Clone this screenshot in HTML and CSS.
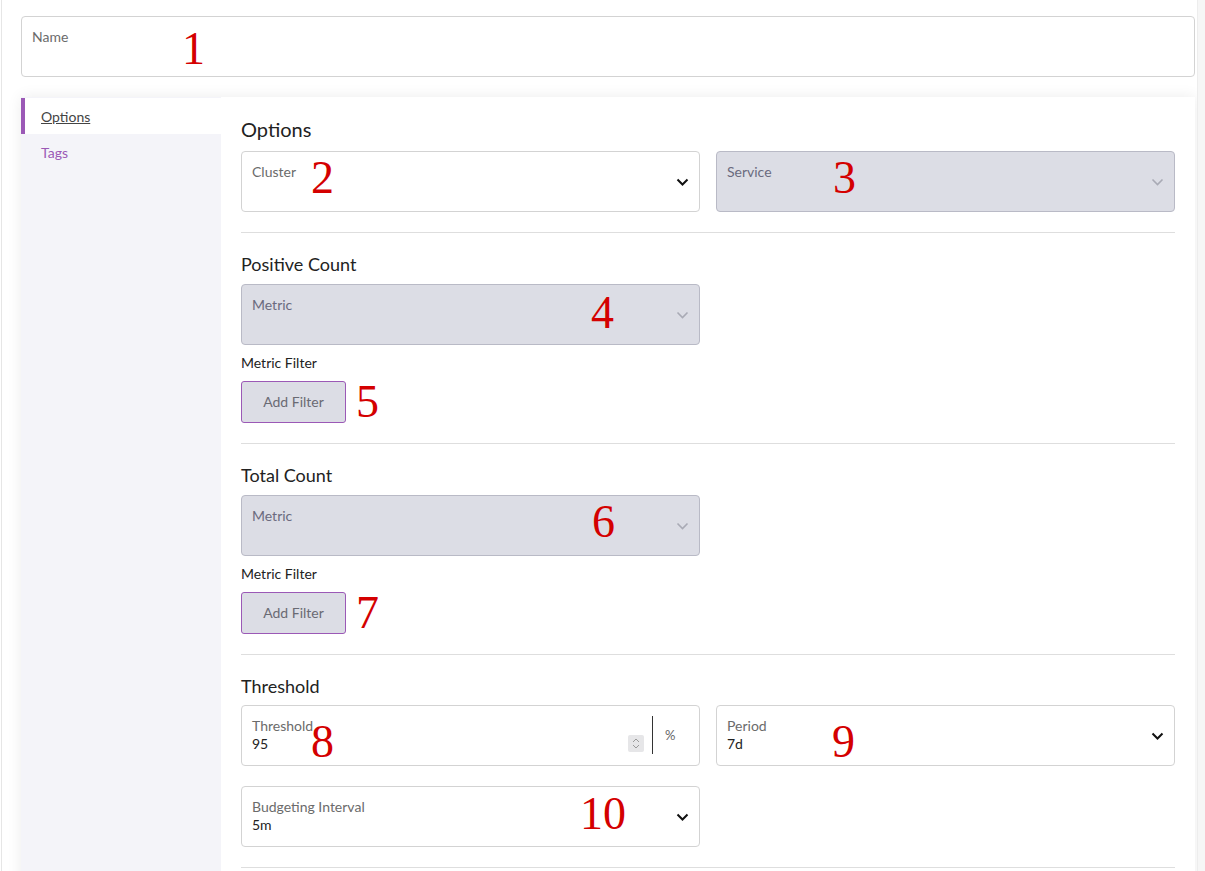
FILE: index.html
```html
<!DOCTYPE html>
<html>
<head>
<meta charset="utf-8">
<title>Form</title>
<link rel="stylesheet" href="styles.css">
</head>
<body>
<div class="page">
  <div class="field name-field">
    <span class="label">Name</span>
    <span class="value"></span>
  </div>

  <div class="card">
    <nav class="sidebar">
      <a class="nav-item active">Options</a>
      <a class="nav-item">Tags</a>
    </nav>
    <main class="content">
      <section class="section first">
        <h2 class="title">Options</h2>
        <div class="grid">
          <div class="field select">
            <span class="label">Cluster</span>
            <span class="value"></span>
            <svg class="chev" viewBox="0 0 12 8"><polyline points="1,1.5 6,6.5 11,1.5"/></svg>
          </div>
          <div class="field select disabled">
            <span class="label">Service</span>
            <span class="value"></span>
            <svg class="chev" viewBox="0 0 12 8"><polyline points="1,1.5 6,6.5 11,1.5"/></svg>
          </div>
        </div>
      </section>

      <section class="section">
        <h3 class="subtitle">Positive Count</h3>
        <div class="grid">
          <div class="field select disabled">
            <span class="label">Metric</span>
            <span class="value"></span>
            <svg class="chev" viewBox="0 0 12 8"><polyline points="1,1.5 6,6.5 11,1.5"/></svg>
          </div>
        </div>
        <div class="filter-label">Metric Filter</div>
        <button class="btn">Add Filter</button>
      </section>

      <section class="section">
        <h3 class="subtitle">Total Count</h3>
        <div class="grid">
          <div class="field select disabled">
            <span class="label">Metric</span>
            <span class="value"></span>
            <svg class="chev" viewBox="0 0 12 8"><polyline points="1,1.5 6,6.5 11,1.5"/></svg>
          </div>
        </div>
        <div class="filter-label">Metric Filter</div>
        <button class="btn">Add Filter</button>
      </section>

      <section class="section">
        <h3 class="subtitle tight">Threshold</h3>
        <div class="grid rows">
          <div class="field number">
            <div class="num-main">
              <span class="label">Threshold</span>
              <span class="value">95</span>
            </div>
            <span class="spinner">
              <svg viewBox="0 0 16 17"><polyline points="5,7 8,4 11,7"/><polyline points="5,10 8,13 11,10"/></svg>
            </span>
            <span class="vsep"></span>
            <span class="unit">%</span>
          </div>
          <div class="field select">
            <span class="label">Period</span>
            <span class="value">7d</span>
            <svg class="chev" viewBox="0 0 12 8"><polyline points="1,1.5 6,6.5 11,1.5"/></svg>
          </div>
          <div class="field select">
            <span class="label">Budgeting Interval</span>
            <span class="value">5m</span>
            <svg class="chev" viewBox="0 0 12 8"><polyline points="1,1.5 6,6.5 11,1.5"/></svg>
          </div>
        </div>
      </section>
    </main>
  </div>
</div>
<div class="strip"></div>

<div class="marks">
  <span class="mark m1">1</span>
  <span class="mark m2">2</span>
  <span class="mark m3">3</span>
  <span class="mark m4">4</span>
  <span class="mark m5">5</span>
  <span class="mark m6">6</span>
  <span class="mark m7">7</span>
  <span class="mark m8">8</span>
  <span class="mark m9">9</span>
  <span class="mark m10">10</span>
</div>
</body>
</html>
```

FILE: styles.css
```css
* { box-sizing: border-box; }

html, body {
  margin: 0;
  height: 100%;
  overflow: hidden;
}

body {
  display: flex;
  font-family: Lato, "Open Sans", "Liberation Sans", sans-serif;
  color: #222;
  background: #fff;
  position: relative;
}

.page {
  flex: 1;
  margin-left: 1px;
  border-left: 1px solid #e6e6e6;
  padding: 16px 2px 0 19px;
  min-width: 0;
}

.strip {
  width: 8px;
  background: #f6f6f6;
  border-left: 1px solid #ededed;
}

/* fields */
.field {
  position: relative;
  height: 61px;
  border: 1px solid #d3d3d3;
  border-radius: 4px;
  background: #fff;
  padding: 11px 10px 0 10px;
  display: flex;
  flex-direction: column;
}

.label {
  font-size: 14px;
  line-height: 17px;
  color: #6b6b6b;
}

.value {
  font-size: 14px;
  line-height: 19px;
  color: #222;
  min-height: 19px;
}

.field.disabled {
  background: #dcdde5;
  border-color: #b9bac6;
}
.field.disabled .label { color: #6a6a7e; }

.chev {
  position: absolute;
  right: 10px;
  top: 26px;
  width: 13px;
  height: 8px;
  fill: none;
  stroke: #111;
  stroke-width: 2;
}
.field.disabled .chev { stroke: #a9aab5; stroke-width: 1.6; }

.name-field {
  width: 100%;
}

/* card */
.card {
  margin-top: 20px;
  display: flex;
  background: #fff;
  box-shadow: 0 0 14px rgba(0, 0, 0, 0.08);
  min-height: 800px;
}

.sidebar {
  width: 200px;
  flex: none;
  background: #f4f4f9;
  display: flex;
  flex-direction: column;
}

.nav-item {
  height: 36px;
  display: flex;
  align-items: center;
  padding-left: 20px;
  font-size: 14px;
  color: #9b59b6;
}

.nav-item.active {
  background: #fff;
  border-left: 4px solid #9b59b6;
  padding-left: 16px;
  color: #444;
  text-decoration: underline;
  margin-top: 1px;
  height: 36px;
}

.content {
  flex: 1;
  padding: 0 20px;
  min-width: 0;
}

.section {
  padding: 20px 0 20px;
  border-bottom: 1px solid #dedede;
}

.title {
  margin: 0 0 10px;
  font-size: 20px;
  line-height: 24px;
  font-weight: 400;
  color: #222;
}

.subtitle {
  margin: 0 0 9px;
  font-size: 18px;
  line-height: 22px;
  font-weight: 400;
  color: #222;
}
.subtitle.tight { margin-bottom: 8px; }

.grid {
  display: grid;
  grid-template-columns: 1fr 1fr;
  column-gap: 16px;
}
.grid.rows { row-gap: 20px; }

.filter-label {
  margin-top: 9px;
  font-size: 14px;
  line-height: 18px;
  color: #222;
}

.btn {
  margin-top: 9px;
  display: block;
  width: 105px;
  height: 42px;
  background: #dcdde5;
  border: 1px solid #9b59b6;
  border-radius: 3px;
  font-family: inherit;
  font-size: 14px;
  color: #6a6a73;
  padding: 0 0 1px;
}

/* number field */
.field.number {
  flex-direction: row;
  align-items: stretch;
  padding: 0 0 0 10px;
}
.num-main {
  flex: 1;
  display: flex;
  flex-direction: column;
  padding-top: 11px;
}
.spinner {
  align-self: flex-start;
  margin-top: 29px;
  width: 16px;
  height: 17px;
  background: #e6e6e8;
  border-radius: 2px;
}
.spinner svg {
  width: 16px;
  height: 17px;
  fill: none;
  stroke: #9a9a9a;
  stroke-width: 1;
  display: block;
}
.vsep {
  width: 1px;
  background: #333;
  margin: 10px 0 11px 8px;
}
.unit {
  width: 46px;
  padding-left: 12px;
  padding-top: 21px;
  font-size: 13px;
  color: #666;
}

/* annotation numbers */
.marks {
  position: absolute;
  left: 0;
  top: 0;
  width: 0;
  height: 0;
}
.mark {
  position: absolute;
  font-family: "Liberation Serif", "Times New Roman", serif;
  font-size: 46px;
  line-height: 46px;
  color: #d40000;
}
.m1 { left: 182px; top: 26px; }
.m2 { left: 311px; top: 155px; }
.m3 { left: 833px; top: 155px; }
.m4 { left: 591px; top: 290px; }
.m5 { left: 356px; top: 379px; }
.m6 { left: 592px; top: 499px; }
.m7 { left: 356px; top: 590px; }
.m8 { left: 311px; top: 719px; }
.m9 { left: 832px; top: 719px; }
.m10 { left: 580px; top: 791px; }
```
